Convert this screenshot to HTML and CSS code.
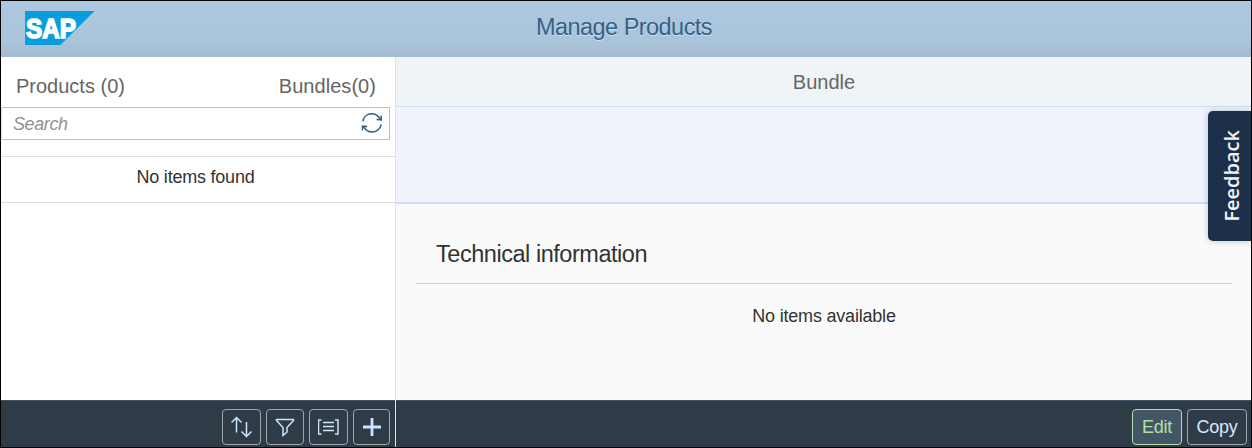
FILE: index.html
```html
<!DOCTYPE html>
<html lang="en">
<head>
<meta charset="utf-8">
<title>Manage Products</title>
<link rel="stylesheet" href="styles.css">
</head>
<body>
<div class="app">
  <header class="shell">
    <svg class="logo" width="70" height="34" viewBox="0 0 70 34" role="img" aria-label="SAP">
      <path d="M0 0H69.500L35.500 34H0Z" fill="#0a9ddb"/>
      <text class="logo-text" x="1" y="27" textLength="50" lengthAdjust="spacingAndGlyphs">SAP</text>
    </svg>
    <h1 class="shell-title">Manage Products</h1>
  </header>
  <main class="split">
    <aside class="master">
      <div class="tabs"><span class="tab-products">Products (0)</span><span class="tab-bundles">Bundles(0)</span></div>
      <div class="search">
        <span class="search-hint">Search</span>
        <svg class="refresh" width="22" height="20" viewBox="0 0 22 20">
          <path d="M1.800 8.300C2.600 3.600 6.300.8 10.700.8C14.500.8 17.300 2.800 19.300 6.400M20.200 2.600V7L15.600 6.500M20.200 11.500C19.200 16 15.500 19 11.300 19C7.400 19 4.300 17 2.500 13.400M1.500 17.400V13L6.100 13.500"/>
        </svg>
      </div>
      <div class="empty-row">No items found</div>
      <footer class="bar master-bar">
        <button class="btn icon-btn w39" aria-label="Sort"><svg width="22" height="22" viewBox="0 0 22 22"><path d="M5.500 16.500V2M.5 6.500L5.500 1.500L10.500 6.500M15.500 6V20M10.500 15.500L15.500 20.500L20.500 15.500"/></svg></button>
        <button class="btn icon-btn w38" aria-label="Filter"><svg width="20" height="20" viewBox="0 0 20 20"><path d="M1.500 2.500H18.500V3.500L12 10.500V15L8 18.500V10.500L1.500 3.500Z"/></svg></button>
        <button class="btn icon-btn w39" aria-label="Group"><svg width="22" height="18" viewBox="1 0 22 18"><path d="M4.500 2H1.500V16H4.500M18 2H21V16H18M6 4.500H17M6 8.500H17M6 12.500H17"/></svg></button>
        <button class="btn icon-btn w37" aria-label="Add"><svg width="20" height="20" viewBox="0 0 20 20"><path class="plus" d="M1 10H19M10 1V19"/></svg></button>
      </footer>
    </aside>
    <section class="detail">
      <div class="detail-head">Bundle</div>
      <div class="detail-band"></div>
      <div class="content">
        <h2 class="section-title"><span>Technical information</span></h2>
        <p class="no-items">No items available</p>
      </div>
      <footer class="bar detail-bar">
        <button class="btn edit">Edit</button>
        <button class="btn copy">Copy</button>
      </footer>
    </section>
  </main>
  <button class="feedback"><span>Feedback</span></button>
</div>
</body>
</html>
```
FILE: styles.css
```css
* { box-sizing: border-box; }
body { margin: 0; font-family: "Liberation Sans", Arial, sans-serif; color: #333; font-size: 18px; }
.app { position: relative; width: 1252px; height: 448px; border: 1px solid #000; display: flex; flex-direction: column; overflow: hidden; }
.shell { height: 56px; flex: none; display: grid; grid-template-columns: 394px 1fr 394px; background: linear-gradient(#acc8e0 0%, #aac5db 70%, #a2bbd0 100%); }
.logo { margin: 10px 0 0 24px; }
.logo-text { font-family: "Liberation Sans", Arial, sans-serif; font-weight: 700; font-size: 27px; fill: #fff; stroke: #fff; stroke-width: 1.6; }
.shell-title { margin: 0; padding-right: 4px; text-align: center; font-size: 23.5px; line-height: 52px; font-weight: 400; color: #346187; letter-spacing: -.54px; text-shadow: 0 1px 0 rgba(255,255,255,.5); }
.split { flex: 1; display: flex; min-height: 0; }
.master { width: 395px; display: flex; flex-direction: column; background: #fff; border-right: 1px solid #dfe2e5; }
.tabs { height: 50px; flex: none; display: flex; justify-content: space-between; padding: 0 19px 0 15px; line-height: 58px; font-size: 20px; color: #666; }
.tab-bundles { letter-spacing: .05px; }
.search { height: 33px; flex: none; width: 389px; border: 1px solid #bfbfbf; border-left-color: #ddd; display: flex; align-items: center; justify-content: space-between; padding: 0 6px 0 11px; }
.search-hint { font-style: italic; color: #919191; letter-spacing: -.4px; padding-top: 1px; }
.refresh { fill: none; stroke: #346187; stroke-width: 1.5; margin-bottom: 1px; }
.empty-row { margin-top: 16px; height: 47px; flex: none; border-top: 1px solid #e0e0e0; border-bottom: 1px solid #ddd; text-align: center; line-height: 41px; padding-right: 5px; letter-spacing: -.22px; }
.bar { height: 47px; flex: none; margin-top: auto; background: #2f3c48; border-top: 1px solid #435463; display: flex; justify-content: flex-end; padding-top: 8px; }
.master-bar { gap: 5px; padding-right: 5px; }
.btn { height: 36px; padding: 0; background: transparent; border: 1px solid #a0a5aa; border-radius: 4px; font: 18px "Liberation Sans", Arial, sans-serif; letter-spacing: -.2px; color: #d5e9fb; display: flex; align-items: center; justify-content: center; padding-top: 1px; }
.icon-btn { padding-top: 0; }
.icon-btn svg { fill: none; stroke: #cbe5fc; stroke-width: 1.5; }
.icon-btn .plus { stroke-width: 2.8; }
.w37 { width: 37px; }
.w38 { width: 38px; }
.w39 { width: 39px; }
.detail { flex: 1; display: flex; flex-direction: column; background: #fafafa; }
.detail-head { height: 50px; flex: none; background: #eff4f8; border-bottom: 1px solid #cfe0ee; text-align: center; line-height: 50px; font-size: 20px; color: #666; padding-left: 1px; }
.detail-band { height: 97px; flex: none; background: #eef3fc; border-bottom: 2px solid #cbdff0; }
.content { padding: 26px 19px 0 20px; }
.section-title { margin: 0; height: 54px; padding-left: 20px; border-bottom: 1px solid #ccc; font-size: 23.5px; line-height: 48px; font-weight: 400; letter-spacing: -.46px; }
.no-items { margin: 0; text-align: center; line-height: 64px; letter-spacing: -.2px; }
.detail-bar { gap: 5px; padding-right: 4px; }
.edit { width: 50px; color: #abe2ab; border-color: #abe2ab; background: #445566; }
.copy { width: 60px; }
.feedback { position: absolute; right: 0; top: 110px; width: 43px; height: 130px; padding: 0; border: 0; border-radius: 5px 0 0 5px; background: #1c3149; color: #f1f4f7; box-shadow: 0 0 6px rgba(40,65,100,.3); display: flex; align-items: center; justify-content: center; font: 600 20px "Open Sans", sans-serif; }
.feedback span { writing-mode: vertical-rl; transform: rotate(180deg); margin-left: 3px; }
```
